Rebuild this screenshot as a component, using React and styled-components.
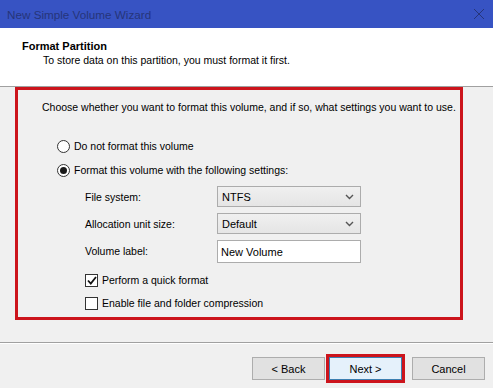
import React from "react";
import styled, { createGlobalStyle } from "styled-components";

const Global = createGlobalStyle`
  html, body { margin: 0; padding: 0; background: #f0f0f0; overflow: hidden; }
  body { font-family: "Liberation Sans", Arial, sans-serif; font-size: 10.5px; color: #000; }
  * { box-sizing: border-box; }
`;

const Window = styled.div`
  width: 493px;
  height: 388px;
  display: flex;
  flex-direction: column;
  background: #f0f0f0;
`;

const TitleBar = styled.div`
  height: 28px;
  background: #3753c3;
  display: flex;
  align-items: center;
  justify-content: space-between;
  padding: 0 7px 0 7px;
  color: #26357a;
  font-size: 11.7px;
`;

const CloseIcon = styled.svg`
  width: 12px;
  height: 12px;
  margin-right: 1px;
`;

const Header = styled.div`
  height: 59px;
  background: #fff;
  padding: 12px 0 0 22px;
  border-bottom: 1px solid #a0a0a0;
`;

const HeaderTitle = styled.div`
  font-weight: bold;
  font-size: 11px;
  line-height: 13px;
`;

const HeaderSub = styled.div`
  line-height: 14px;
  padding-left: 21px;
`;

const Body = styled.div`
  height: 255px;
  padding: 0 0 0 15px;
`;

const Highlight = styled.div`
  width: 448px;
  height: 233px;
  border: 3px solid #cc141c;
  padding: 10px 0 0 24px;
  display: flex;
  flex-direction: column;
`;

const Intro = styled.div`
  line-height: 14px;
`;

const Options = styled.div`
  margin-top: 22px;
  padding-left: 15px;
  display: flex;
  flex-direction: column;
  gap: 4px;
`;

const Choice = styled.div`
  height: 20px;
  display: flex;
  align-items: center;
  gap: 4px;
`;

const Radio = styled.span`
  width: 13px;
  height: 13px;
  border-radius: 50%;
  border: 1px solid #333;
  background: #fff;
  display: flex;
  align-items: center;
  justify-content: center;
  &::after {
    content: "";
    width: 7px;
    height: 7px;
    border-radius: 50%;
    background: ${(p) => (p.$on ? "#1a1a1a" : "transparent")};
  }
`;

const Settings = styled.div`
  margin-top: 6px;
  padding-left: 43px;
  display: grid;
  grid-template-columns: 132px 144px;
  grid-auto-rows: 21px;
  row-gap: 6px;
  align-items: center;
`;

const FieldLabel = styled.div`
  line-height: 14px;
`;

const Select = styled.div`
  height: 21px;
  border: 1px solid #acacac;
  background: linear-gradient(#f0f0f0, #e5e5e5);
  display: flex;
  align-items: center;
  justify-content: space-between;
  padding: 0 6px 0 4px;
  font-size: 11px;
`;

const Input = styled.div`
  height: 23px;
  align-self: start;
  border: 1px solid #acacac;
  background: #fff;
  display: flex;
  align-items: center;
  padding: 0 3px;
  font-size: 11px;
`;

const Checks = styled.div`
  margin-top: 10px;
  padding-left: 43px;
  display: flex;
  flex-direction: column;
  gap: 5px;
`;

const CheckRow = styled.div`
  height: 18px;
  display: flex;
  align-items: center;
  gap: 4px;
`;

const Box = styled.span`
  width: 13px;
  height: 13px;
  border: 1px solid #333;
  background: #fff;
  display: flex;
  align-items: center;
  justify-content: center;
`;

const Footer = styled.div`
  flex: 1;
  border-top: 1px solid #a0a0a0;
  box-shadow: inset 0 1px 0 #fff;
  display: flex;
  justify-content: flex-end;
  align-items: flex-start;
  padding: 14px 8px 0 0;
`;

const Button = styled.button`
  width: 73px;
  height: 23px;
  margin-left: ${(p) => p.$gap || 0}px;
  border: 1px solid ${(p) => (p.$default ? "#3c7fb1" : "#adadad")};
  background: ${(p) => (p.$default ? "#e5f1fb" : "#e1e1e1")};
  font-family: "Liberation Sans", Arial, sans-serif;
  font-size: 11px;
  color: #000;
  padding: 0;
  outline: ${(p) => (p.$marked ? "3px solid #cc141c" : "none")};
  outline-offset: 0px;
`;

const Chevron = () => (
  <svg width="9" height="6" viewBox="0 0 9 6">
    <path d="M1 1 L4.5 4.5 L8 1" fill="none" stroke="#555" strokeWidth="1.4" />
  </svg>
);

export default function App() {
  return (
    <>
      <Global />
      <Window>
        <TitleBar>
          <span>New Simple Volume Wizard</span>
          <CloseIcon viewBox="0 0 12 12">
            <path d="M1 1 L11 11 M11 1 L1 11" stroke="#26357a" strokeWidth="1" />
          </CloseIcon>
        </TitleBar>
        <Header>
          <HeaderTitle>Format Partition</HeaderTitle>
          <HeaderSub>To store data on this partition, you must format it first.</HeaderSub>
        </Header>
        <Body>
          <Highlight>
            <Intro>
              Choose whether you want to format this volume, and if so, what settings you want to use.
            </Intro>
            <Options>
              <Choice>
                <Radio />
                <span>Do not format this volume</span>
              </Choice>
              <Choice>
                <Radio $on />
                <span>Format this volume with the following settings:</span>
              </Choice>
            </Options>
            <Settings>
              <FieldLabel>File system:</FieldLabel>
              <Select>
                <span>NTFS</span>
                <Chevron />
              </Select>
              <FieldLabel>Allocation unit size:</FieldLabel>
              <Select>
                <span>Default</span>
                <Chevron />
              </Select>
              <FieldLabel>Volume label:</FieldLabel>
              <Input>New Volume</Input>
            </Settings>
            <Checks>
              <CheckRow>
                <Box>
                  <svg width="10" height="9" viewBox="0 0 10 9">
                    <path d="M1 4.5 L3.8 7.5 L9 1" fill="none" stroke="#111" strokeWidth="1.8" />
                  </svg>
                </Box>
                <span>Perform a quick format</span>
              </CheckRow>
              <CheckRow>
                <Box />
                <span>Enable file and folder compression</span>
              </CheckRow>
            </Checks>
          </Highlight>
        </Body>
        <Footer>
          <Button>&lt; Back</Button>
          <Button $gap={4} $default $marked>Next &gt;</Button>
          <Button $gap={10}>Cancel</Button>
        </Footer>
      </Window>
    </>
  );
}
